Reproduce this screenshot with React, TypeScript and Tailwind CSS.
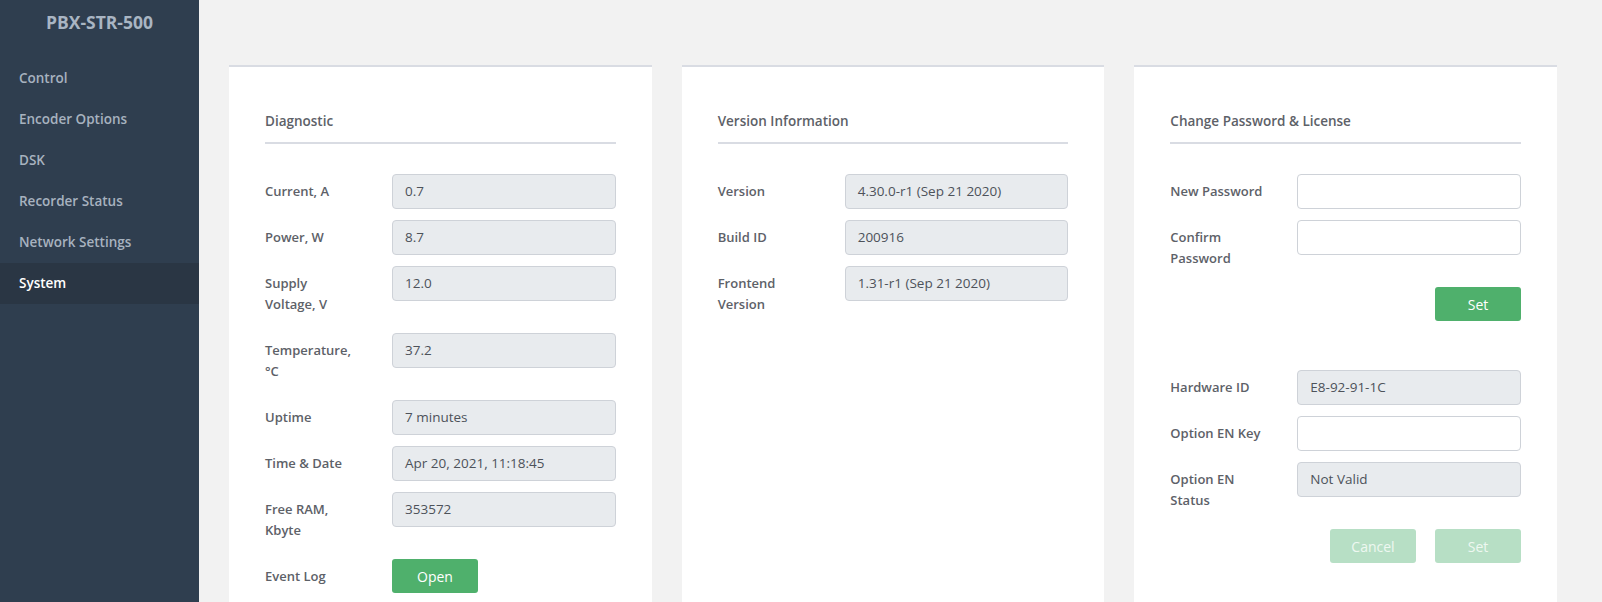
import React from "react";

const font = { fontFamily: '"Open Sans", "Noto Sans", sans-serif' };

function Row({ label, value, kind = "ro" }: { label: React.ReactNode; value?: string; kind?: "ro" | "input" }) {
  return (
    <div className="grid grid-cols-[127px_1fr] mb-[11px]">
      <div className="py-[7px] leading-[21px] text-[13px] font-semibold text-[#5d6168] pr-2">{label}</div>
      {kind === "ro" ? (
        <div className="h-[35px] rounded-[4px] border border-[#ced2d8] bg-[#e8ebee] pl-[12px] flex items-center text-[13.5px] text-[#4d525a]">
          {value}
        </div>
      ) : (
        <div className="h-[35px] rounded-[4px] border border-[#ced2d8] bg-white" />
      )}
    </div>
  );
}

function Card({ title, children }: { title: string; children: React.ReactNode }) {
  return (
    <div className="bg-white border-t-2 border-[#d9dce3] px-[36px] pt-[44px] min-h-[540px]">
      <div className="text-[13.5px] font-semibold leading-[21px] text-[#5d6168] pb-[10px] border-b-2 border-[#d9dce3]">{title}</div>
      <div className="mt-[30px]">{children}</div>
    </div>
  );
}

function Btn({ children, disabled }: { children: React.ReactNode; disabled?: boolean }) {
  return (
    <button
      className={
        "w-[86px] h-[34px] rounded-[3px] text-[14px] " +
        (disabled ? "bg-[#b7dfc5] text-[#eef8f1]" : "bg-[#4fb06c] text-white")
      }
    >
      {children}
    </button>
  );
}

export default function App() {
  const nav = ["Control", "Encoder Options", "DSK", "Recorder Status", "Network Settings", "System"];
  return (
    <div className="flex w-[1602px] h-[602px] overflow-hidden bg-[#f2f2f2]" style={font}>
      <aside className="w-[199px] shrink-0 bg-[#2f3e4f]">
        <div className="h-[42px] pt-[2px] flex items-center justify-center text-[17.5px] font-bold text-[#a9b5c3]">PBX-STR-500</div>
        <nav className="mt-[16px]">
          {nav.map((n) => (
            <div
              key={n}
              className={
                "h-[41px] flex items-center pl-[19px] text-[13.5px] font-semibold " +
                (n === "System" ? "bg-[#2a3644] text-white" : "text-[#a7b2bf]")
              }
            >
              {n}
            </div>
          ))}
        </nav>
      </aside>
      <main className="flex-1 pl-[30px] pr-[45px] pt-[65px] grid grid-cols-3 gap-[30px] items-start">
        <Card title="Diagnostic">
          <Row label="Current, A" value="0.7" />
          <Row label="Power, W" value="8.7" />
          <Row label={<>Supply<br />Voltage, V</>} value="12.0" />
          <Row label={<>Temperature,<br />°C</>} value="37.2" />
          <Row label="Uptime" value="7 minutes" />
          <Row label="Time & Date" value="Apr 20, 2021, 11:18:45" />
          <Row label={<>Free RAM,<br />Kbyte</>} value="353572" />
          <div className="grid grid-cols-[127px_1fr]">
            <div className="py-[7px] leading-[21px] text-[13px] font-semibold text-[#5d6168]">Event Log</div>
            <div>
              <Btn>Open</Btn>
            </div>
          </div>
        </Card>
        <Card title="Version Information">
          <Row label="Version" value="4.30.0-r1 (Sep 21 2020)" />
          <Row label="Build ID" value="200916" />
          <Row label={<>Frontend<br />Version</>} value="1.31-r1 (Sep 21 2020)" />
        </Card>
        <Card title="Change Password & License">
          <Row label="New Password" kind="input" />
          <Row label={<>Confirm<br />Password</>} kind="input" />
          <div className="flex justify-end">
            <Btn>Set</Btn>
          </div>
          <div className="mt-[49px]">
            <Row label="Hardware ID" value="E8-92-91-1C" />
            <Row label="Option EN Key" kind="input" />
            <Row label={<>Option EN<br />Status</>} value="Not Valid" />
            <div className="flex justify-end gap-[19px]">
              <Btn disabled>Cancel</Btn>
              <Btn disabled>Set</Btn>
            </div>
          </div>
        </Card>
      </main>
    </div>
  );
}
